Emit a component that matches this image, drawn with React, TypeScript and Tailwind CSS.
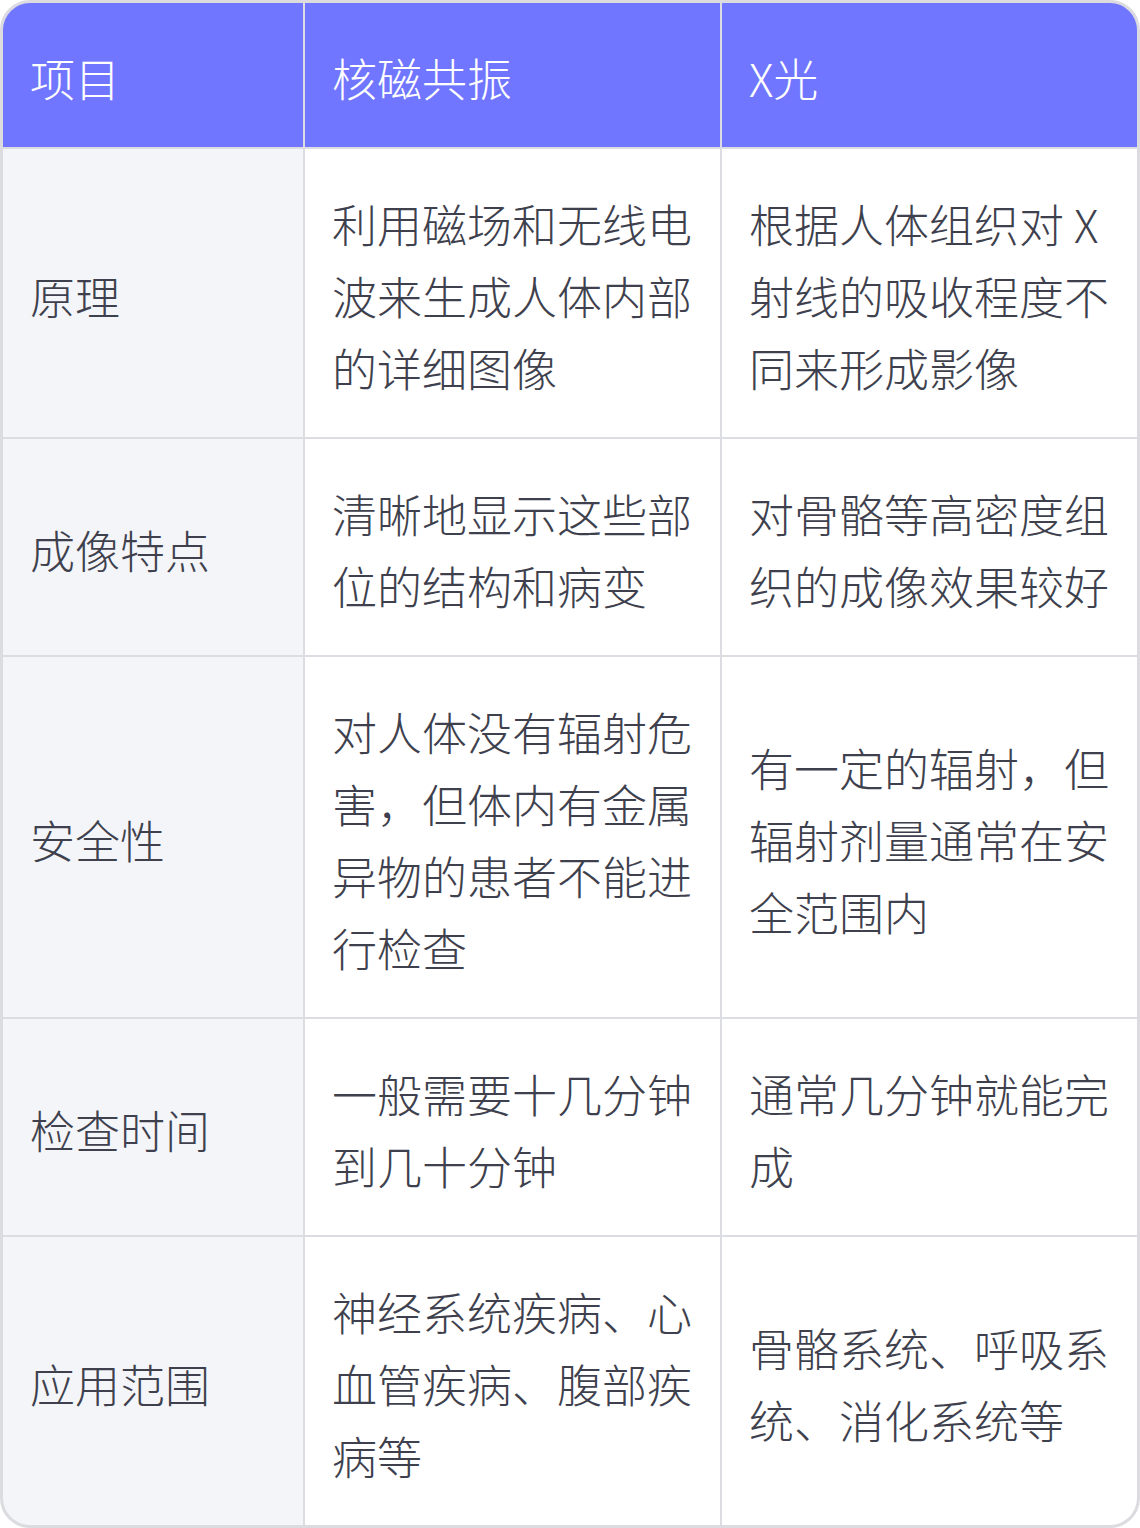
const rows = [
  {
    item: "原理",
    mri: "利用磁场和无线电波来生成人体内部的详细图像",
    xray: "根据人体组织对 X 射线的吸收程度不同来形成影像",
  },
  {
    item: "成像特点",
    mri: "清晰地显示这些部位的结构和病变",
    xray: "对骨骼等高密度组织的成像效果较好",
  },
  {
    item: "安全性",
    mri: "对人体没有辐射危害，但体内有金属异物的患者不能进行检查",
    xray: "有一定的辐射，但辐射剂量通常在安全范围内",
  },
  {
    item: "检查时间",
    mri: "一般需要十几分钟到几十分钟",
    xray: "通常几分钟就能完成",
  },
  {
    item: "应用范围",
    mri: "神经系统疾病、心血管疾病、腹部疾病等",
    xray: "骨骼系统、呼吸系统、消化系统等",
  },
];

const cell = "flex items-center px-[27px] pt-[39px] pb-[33px] text-[45px] leading-[72px] font-light";

export default function App() {
  return (
    <div
      className="w-[1140px] bg-white"
      style={{ fontFamily: '"Noto Sans CJK SC", "Noto Sans", sans-serif' }}
    >
      <div className="overflow-hidden rounded-[30px] border-[3px] border-[#dcdce0] bg-[#dcdde3]">
        <div className="grid grid-cols-[300px_415px_415px] gap-[2px]">
          <div className={`${cell} bg-[#7076ff] text-white`}>项目</div>
          <div className={`${cell} bg-[#7076ff] text-white`}>核磁共振</div>
          <div className={`${cell} bg-[#7076ff] text-white`}>X光</div>
          {rows.map((row) => (
            <>
              <div key={row.item + "a"} className={`${cell} bg-[#f4f5f9] text-[#3e414d]`}>
                {row.item}
              </div>
              <div key={row.item + "b"} className={`${cell} bg-white text-[#3e414d]`}>
                {row.mri}
              </div>
              <div key={row.item + "c"} className={`${cell} bg-white text-[#3e414d]`}>
                {row.xray}
              </div>
            </>
          ))}
        </div>
      </div>
    </div>
  );
}
